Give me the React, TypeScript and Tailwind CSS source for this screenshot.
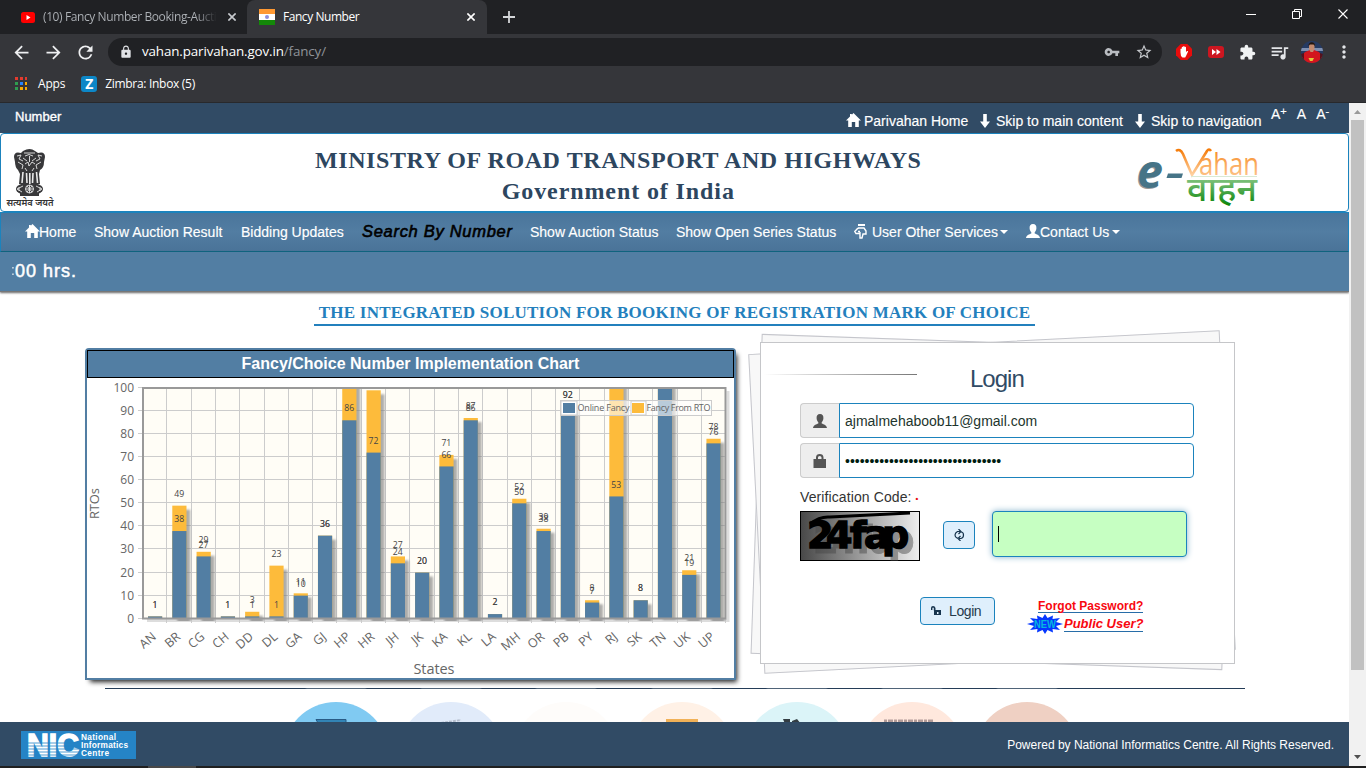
import React from "react";
import { MdVpnKey, MdStarBorder, MdExtension, MdQueueMusic, MdMoreVert, MdLock, MdRefresh, MdArrowBack, MdArrowForward } from "react-icons/md";

const states: [string, number, number][] = [
  ["AN", 1, 1], ["BR", 38, 49], ["CG", 27, 29], ["CH", 1, 1], ["DD", 1, 3], ["DL", 1, 23],
  ["GA", 10, 11], ["GJ", 36, 36], ["HP", 86, 110], ["HR", 72, 99], ["JH", 24, 27], ["JK", 20, 20],
  ["KA", 66, 71], ["KL", 86, 87], ["LA", 2, 2], ["MH", 50, 52], ["OR", 38, 39], ["PB", 92, 92],
  ["PY", 7, 8], ["RJ", 53, 110], ["SK", 8, 8], ["TN", 110, 110], ["UK", 19, 21], ["UP", 76, 78],
];

const HomeIcon = ({ className = "" }: { className?: string }) => (
  <svg className={className} width="15" height="14" viewBox="0 0 15 14" fill="currentColor">
    <path d="M7.5 0 15 7.6H12.8V14H9.2V9H5.8V14H2.2V7.6H0L4 3.5V1H5.8V1.8Z" />
  </svg>
);
const DownIcon = () => (
  <svg width="10" height="14" viewBox="0 0 10 14" fill="currentColor">
    <path d="M3.2 0H6.8V7.5H10L5 14 0 7.5H3.2Z" />
  </svg>
);
const UserIcon = ({ className = "" }: { className?: string }) => (
  <svg className={className} width="14" height="14" viewBox="0 0 14 14" fill="currentColor">
    <path d="M7 0C9.5 0 10.6 1.8 10.4 4.2 10.3 6 9.6 7.2 8.7 8.3V9.6C10.8 10.6 13.6 11.2 14 14H0C.4 11.2 3.2 10.6 5.3 9.6V8.3C4.4 7.2 3.7 6 3.6 4.2 3.4 1.8 4.500 0 7 0Z" />
  </svg>
);
const Caret = () => (
  <svg width="8" height="4" viewBox="0 0 8 4" fill="currentColor"><path d="M0 0H8L4 4Z" /></svg>
);
const Close = ({ s = 9, w = 1.6 }: { s?: number; w?: number }) => (
  <svg width={s} height={s} viewBox="0 0 10 10" stroke="currentColor" strokeWidth={w}><path d="M.5.5 9.500 9.500M9.500.5.5 9.500" /></svg>
);

function Browser() {
  return (
    <div className="h-[103px] shrink-0 border-b border-[#28292c] bg-[#35363a] font-['Open_Sans',sans-serif] text-xs text-white">
      <div className="flex h-[34px] bg-[#202124]">
        <div className="flex w-[247px] items-center rounded-br-lg pl-[21px]">
          <svg className="shrink-0" width="14" height="11" viewBox="0 0 14 11"><rect width="14" height="11" rx="2.500" fill="#f00" /><path d="M5.500 3 9.500 5.500 5.500 8Z" fill="#fff" /></svg>
          <span className="ml-[8px] w-[174px] overflow-hidden whitespace-nowrap bg-linear-to-r from-[#b0b4b9] from-88% to-[#202124] bg-clip-text tracking-[-0.4px] text-transparent">(10) Fancy Number Booking-Auction</span>
          <span className="ml-[11px] text-[#c8cbcf]"><Close s={8} w={2} /></span>
        </div>
        <div className="flex h-[34px] w-[240px] items-center rounded-t-lg bg-[#35363a] pl-3">
          <svg width="16" height="16" viewBox="0 0 16 16"><path fill="#ff9933" d="M0 0h16v5H0z" /><path fill="#fff" d="M0 5h16v6H0z" /><path fill="#138808" d="M0 11h16v5H0z" /><circle cx="8" cy="8" r="2" fill="#8e8edc" /></svg>
          <span className="ml-2 w-[184px] tracking-[-0.45px]">Fancy Number</span>
          <Close s={8} w={2} />
        </div>
        <div className="flex flex-1 items-center pl-4">
          <svg width="12" height="12" viewBox="0 0 12 12" stroke="#d4d6d9" strokeWidth="1.800"><path d="M6 0V12M0 6H12" /></svg>
        </div>
        <div className="flex items-start gap-[36px] pr-[18px] pt-[9px]">
          <svg width="10" height="11" viewBox="0 0 10 11" stroke="#fff"><path d="M0 5.500H10" /></svg>
          <svg width="10" height="10" viewBox="0 0 10 10" fill="none" stroke="#fff"><path d="M.5 2.500H7.500V9.500H.5ZM2.500 2.500V.5H9.500V7.500H7.500" /></svg>
          <Close s={10} w={1.1} />
        </div>
      </div>
      <div className="flex h-[35px] items-center pt-px">
        <div className="flex w-[108px] shrink-0 items-center gap-[11px] pl-[11px] text-[#eeeff1]">
          <MdArrowBack size={21} /><MdArrowForward size={21} /><MdRefresh size={21} />
        </div>
        <div className="flex h-7 w-[1054px] items-center rounded-full bg-[#202124] pl-[11px] text-[13.4px]">
          <MdLock size={14} className="text-[#e1e3e6]" />
          <span className="ml-[9px] tracking-[-0.13px]">vahan.parivahan.gov.in<span className="text-[#8f9398]">/fancy/</span></span>
          <span className="flex-1" />
          <MdVpnKey size={16} className="mr-[15px] text-[#b9bcc1]" />
          <MdStarBorder size={18} className="mr-[9px] text-[#c4c7cb]" />
        </div>
        <div className="flex flex-1 items-center pl-[14px]">
          <svg width="16" height="16" viewBox="0 0 16 16"><path fill="#e80c0c" d="M4.700 0h6.600L16 4.700v6.600L11.300 16H4.700L0 11.300V4.700Z" /><path fill="#fff" d="M4.500 8.500V5a.7.7 0 0 1 1.300 0V3.500a.7.7 0 0 1 1.400 0V2.700a.7.7 0 0 1 1.400 0v.8a.7.7 0 0 1 1.400 0V8l1.100-.9c.7-.4 1.200 0 .9.6L10 12l-.8 1.500H6.500L5 12Z" /></svg>
          <svg className="ml-4" width="16" height="12" viewBox="0 0 16 12"><rect width="16" height="12" rx="3" fill="#cd1620" /><path d="M4 3 8 6 4 9ZM8.500 3 12.500 6 8.500 9Z" fill="#fff" /></svg>
          <MdExtension size={17} className="ml-[15px] text-[#f1f3f4]" />
          <MdQueueMusic size={21} className="ml-[13px] text-[#e4e6e9]" />
          <svg className="ml-[11px]" width="22" height="22" viewBox="0 0 22 22">
            <defs><clipPath id="av"><circle cx="11" cy="11" r="11" /></clipPath></defs>
            <g clipPath="url(#av)"><rect width="22" height="22" fill="#253a62" /><path d="M0 7H22V10H0Z" fill="#7f8fb0" /><path d="M1 15 4 11 9 9H13L18 11 21 15V22H1Z" fill="#d3161d" /><path d="M0 13 3 12V22H0ZM19 12 22 13V22H19Z" fill="#55121c" /><path d="M8 3H13.500V8L12 11H9.500L8 8Z" fill="#c28a70" /><path d="M7.500 5C7 0 14.500 0 14 5L12.500 3.500H9Z" fill="#24160f" /><path d="M7.500 17H13L11.500 20H9Z" fill="#e3c73a" /></g>
          </svg>
          <MdMoreVert size={20} className="ml-[11px] text-[#e4e6e9]" />
        </div>
      </div>
      <div className="flex h-[30px] items-center pl-[15px]">
        <svg width="12" height="14" viewBox="0 0 12 14">
          <path fill="#e33b2e" d="M0 0h3v3H0zM5 0h3v3H5zM10 0h3v3h-3z" /><path fill="#2f9e50" d="M0 5h3v3H0zM0 10h3v3H0z" /><path fill="#2684fc" d="M5 5h3v3H5z" /><path fill="#f9ab00" d="M10 5h3v3h-3zM5 10h3v3H5zM10 10h3v3h-3z" />
        </svg>
        <span className="ml-[11px] tracking-[-0.2px]">Apps</span>
        <span className="ml-4 flex size-4 items-center justify-center rounded-[3px] bg-[#0d87c7] text-[14px] leading-none font-bold">Z</span>
        <span className="ml-2 tracking-[-0.3px]">Zimbra: Inbox (5)</span>
      </div>
    </div>
  );
}

function Emblem() {
  return (
    <svg width="50" height="62" viewBox="0 0 50 62">
      <g fill="#38383a">
        <path d="M17 3Q24-1 29 3L32 5Q39 3 39 9L38 14Q38 20 34 22L33 26 34 36H13L14 26 12 22Q9 19 9 14L8 9Q8 3 15 5Z" />
        <ellipse cx="23.500" cy="41" rx="13.500" ry="6.500" />
        <path d="M14 45H33V48H14Z" />
      </g>
      <g fill="none" stroke="#e9e9e9" strokeWidth=".9" transform="translate(-1 0)">
        <path d="M19 5H30M20 8Q24 5 28 8M18 10 22 13M31 10 27 13M24.500 8V14M12 8 16 7 14 11 18 13M37 8 33 7 35 11 31 13M13 14 18 17 17 21M36 14 31 17 32 21M20 16 23 14 24 18 27 14 30 16M20 20 22 23M29 20 27 23" />
        <path strokeWidth="1.600" d="M18 24 17 35M21.500 25 22 35M28 25 27.500 35M31.500 24 32.500 35M24.800 25V36" />
        <path d="M18 38 12 41 17 44M14 39V43M31 38 37 41 32 44M35 39V43" />
        <circle cx="24.500" cy="41" r="4" /><path d="M24.500 37V45M20.500 41H28.500M22 38 27 44M27 38 22 44" />
      </g>
      <text x="0.500" y="58" fontSize="9.500" fontWeight="600" fill="#333" fontFamily="Noto Sans Devanagari, Noto Sans, sans-serif" textLength="47" lengthAdjust="spacingAndGlyphs">सत्यमेव जयते</text>
    </svg>
  );
}

function VahanLogo() {
  return (
    <svg width="128" height="64" viewBox="0 0 128 64" fontFamily="Open Sans, sans-serif">
      <defs>
        <linearGradient id="or" x1="0" y1="0" x2="0" y2="1"><stop stopColor="#f57b08" /><stop offset="1" stopColor="#ffd2a3" /></linearGradient>
        <linearGradient id="gr" x1="0" y1="0" x2="0" y2="1"><stop offset=".2" stopColor="#7cc079" /><stop offset=".8" stopColor="#078407" /></linearGradient>
      </defs>
      <g fontWeight="bold" fontStyle="italic">
        <text x="1" y="42" fontSize="46" fill="#999" textLength="26" lengthAdjust="spacingAndGlyphs">e</text>
        <text x="2" y="41" fontSize="46" fill="#467487" textLength="26" lengthAdjust="spacingAndGlyphs">e</text>
      </g>
      <path d="M33 26.500H48L46.500 31H31.500Z" fill="#467487" />
      <path d="M41 4Q45 1 48 7L57 28 72 4Q74 1 76 4" fill="none" stroke="url(#or)" strokeWidth="2.600" />
      <text x="64" y="27.500" fontSize="31" fill="url(#or)" textLength="60" lengthAdjust="spacingAndGlyphs">ahan</text>
      <path d="M56 29.500H122" stroke="#d9e9d5" />
      <text x="52" y="54" fontSize="34" fontWeight="500" fill="url(#gr)" textLength="70" lengthAdjust="spacingAndGlyphs" fontFamily="Noto Sans Devanagari, Noto Sans, sans-serif">वाहन</text>
    </svg>
  );
}

function Header() {
  return (
    <>
      <div className="flex h-[30px] shrink-0 bg-[#314b65] text-sm text-white">
        <span className="pt-[5px] pl-[15px] text-[13px] [-webkit-text-stroke:0.35px]">Number</span>
        <div className="ml-auto flex items-center pt-[6px] text-[14px] leading-none whitespace-nowrap [-webkit-text-stroke:0.15px]">
          <HomeIcon className="mr-[3px] -translate-y-px" /><span className="w-[116px]">Parivahan Home</span>
          <DownIcon /><span className="ml-[6px] w-[139px]">Skip to main content</span>
          <DownIcon /><span className="ml-[6px] w-[120px]">Skip to navigation</span>
        </div>
        <div className="flex w-[78px] gap-[10px] pt-px text-[14px] [-webkit-text-stroke:0.15px]">
          <span>A<sup className="top-[-0.4em] text-[11px]">+</sup></span><span>A</span><span>A<sup className="top-[-0.4em] text-[11px]">-</sup></span>
        </div>
      </div>
      <div className="flex h-[79px] shrink-0 rounded border border-[#1b83bd] bg-white">
        <div className="w-[314px] pt-[14px] pl-[5px]"><Emblem /></div>
        <div className="pt-[11px] text-center font-['Liberation_Serif',serif] text-[24px] leading-[31px] font-bold whitespace-nowrap text-[#2d465f]">
          <div className="tracking-[0.59px]">MINISTRY OF ROAD TRANSPORT AND HIGHWAYS</div>
          <div className="tracking-[0.9px]">Government of India</div>
        </div>
        <div className="ml-auto w-[213px] pt-[13px]"><VahanLogo /></div>
      </div>
      <nav className="flex h-10 shrink-0 items-center border border-[#1b83bd] border-b-[#096480] bg-linear-to-b from-[#4a759b] via-[#527da2] to-[#4a7398] pl-6 text-[14px] whitespace-nowrap text-white [-webkit-text-stroke:0.15px]">
        <HomeIcon className="-mr-px -translate-y-px" /><span className="w-[55px]">Home</span>
        <span className="w-[147px]">Show Auction Result</span>
        <span className="w-[121px]">Bidding Updates</span>
        <span className="w-[168px] pb-px text-[16.500px] tracking-[0.7px] text-black italic [-webkit-text-stroke:0.6px]">Search By Number</span>
        <span className="w-[146px]">Show Auction Status</span>
        <span className="w-[178px]">Show Open Series Status</span>
        <svg className="-translate-y-px" width="13" height="15" viewBox="0 0 13 15" fill="none" stroke="currentColor" strokeWidth="1.400"><path strokeWidth="2" d="M4 1H11" /><path d="M4 4H10L12 7V10H9L8 14H6V8M4 4 .8 7.500 2 9.500H6M4 7.500H6" /></svg>
        <span className="ml-[5px] w-[128px]">User Other Services</span><Caret />
        <UserIcon className="ml-[18px] -translate-y-px" /><span className="w-[72px]">Contact Us</span><Caret />
      </nav>
      <div className="flex h-10 shrink-0 items-center border-b border-[#777] bg-[#527ea3] pb-px pl-[11px] text-lg tracking-[1px] text-white shadow-[0_1px_2px_#666]"><span className="text-[14px] opacity-80">:</span><span className="-ml-px [-webkit-text-stroke:0.5px]">00 hrs.</span></div>
    </>
  );
}

function Chart() {
  const y = (v: number) => 618.7 - Math.min(v, 100) * 2.307;
  return (
    <section className="relative z-10 mt-[16px] ml-[85px] h-[332px] w-[651px] shrink-0 rounded-t border-2 border-[#527ea3] bg-white shadow-[3px_4px_5px_-2px_#222]">
      <h2 className="h-7 border border-black bg-[#527ea3] text-center text-base leading-[25px] font-bold text-white">Fancy/Choice Number Implementation Chart</h2>
      <svg className="block" width="647" height="300" viewBox="87 378 647 300" fontFamily="Open Sans, sans-serif" fill="#666">
        <defs>
          <clipPath id="plot"><rect x="143" y="388" width="588" height="233" /></clipPath>
          <filter id="soft"><feGaussianBlur stdDeviation="1" /></filter>
        </defs>
        <path d="M147 620.500H728V391" fill="none" stroke="#bbb" strokeWidth="3" opacity=".5" />
        <rect x="143" y="388" width="583" height="231" fill="#fffdf6" />
        {Array.from({ length: 11 }, (_, i) => (
          <g key={i}>
            <path d={`M138 ${Math.round(y(i * 10)) - 0.5}H726`} stroke="#ccc" />
            <text x="134" y={y(i * 10) + 4} textAnchor="end" fontSize="12">{i * 10}</text>
          </g>
        ))}
        {states.map((s, i) => <path key={i} d={`M${Math.round(143 + (i + 1) * 24.3) - 0.5} 388V623`} stroke="#ccc" />)}
        <g clipPath="url(#plot)">
          {states.map(([n, , t], i) => t > 2 && <rect key={n} x={153 + i * 24.28} y={y(t) + (t > 100 ? -3 : 4)} width="13" height={623 - y(t)} fill="#777" opacity=".6" filter="url(#soft)" />)}
          {states.map(([n, b, t], i) => (
            <g key={n}>
              <rect x={148 + i * 24.28} y={y(t)} width="14.200" height={618 - y(t)} fill="#fdbb3b" />
              <rect x={148 + i * 24.28} y={y(b)} width="14.200" height={618 - y(b)} fill="#527ea3" />
            </g>
          ))}
        </g>
        <rect x="143" y="388" width="582.500" height="230.500" fill="none" stroke="#999" strokeWidth="2" />
        {states.map(([n, b, t], i) => (
          <g key={n}>
            <g fontSize="8.700" textAnchor="middle" fill="#444">
              {b <= 95 && <text x={155 + i * 24.28} y={y(b) - 8.8}>{b}</text>}
              {t <= 95 && <text x={155 + i * 24.28} y={y(t) - 8.8}>{t}</text>}
            </g>
            <text transform={`translate(${157 + i * 24.28} 638) rotate(-40)`} textAnchor="end" fontSize="12.500">{n}</text>
          </g>
        ))}
        <rect x="560.500" y="400.500" width="151" height="15" fill="#fff" fillOpacity=".6" stroke="#ccc" />
        <path d="M561 401H577V415H561ZM631 401H646V415H631Z" fill="#fff" stroke="#ccc" />
        <rect x="563" y="403" width="12" height="10" fill="#527ea3" />
        <rect x="632" y="403" width="12" height="10" fill="#fdbb3b" />
        <text x="577.500" y="411" fontSize="9" textLength="52">Online Fancy</text>
        <text x="646.500" y="411" fontSize="9" textLength="64">Fancy From RTO</text>
        <text x="434" y="674" textAnchor="middle" fontSize="14.500" textLength="41">States</text>
        <text transform="translate(99 519) rotate(-90)" fontSize="13" textLength="31">RTOs</text>
      </svg>
    </section>
  );
}

function Login() {
  return (
    <section className="relative ml-6 mt-[10px] h-[322px] w-[475px] shrink-0">
      <div className="absolute top-0 left-[-4px] h-[320px] w-[472px] rotate-[2deg] border border-[#c5c6cc] bg-[#f8f8f8]" />
      <div className="absolute top-0 left-[-4px] h-[320px] w-[472px] rotate-[-2.900deg] border border-[#c5c6cc] bg-[#f8f8f8]" />
      <div className="relative flex h-full flex-col border border-[#c5c6c9] bg-white pl-[39px]">
        <div className="flex h-[60px]">
          <div className="-ml-[36px] mt-[31px] h-px w-[153px] bg-linear-to-r from-white to-[#777]" />
          <h1 className="ml-[53px] pt-[18px] text-[24px] tracking-[-1px] text-[#314b65]">Login</h1>
        </div>
        {[0, 1].map((i) => (
          <div key={i} className="mb-[5px] flex h-[35px] w-[394px]">
            <div className="flex w-[39px] items-center justify-center rounded-l border border-r-0 border-[#ccc] bg-[#eee] text-[#555]">
              {i === 0 ? <UserIcon /> : <svg width="14" height="14" viewBox="0 0 14 14" fill="currentColor"><path d="M3 5V3.500C3 1 4.500 0 6.700 0S10.500 1 10.500 3.500V5H13V14H.5V5ZM5 5H8.500V3.500Q8.500 2 6.700 2T5 3.500Z" /></svg>}
            </div>
            <div className="flex flex-1 items-center rounded-r border border-[#1b83bd] pt-px pl-[5px] text-sm text-[#1d352d]">
              {i === 0 ? "ajmalmehaboob11@gmail.com" : <span className="text-[14px] tracking-[-0.02px] text-[#001c10]">••••••••••••••••••••••••••••••••</span>}
            </div>
          </div>
        ))}
        <div className="h-[28px] pt-[4px] text-sm tracking-[0.1px] text-[#333]">Verification Code: <span className="relative -top-px text-[8px] font-bold text-red-600">•</span></div>
        <div className="flex h-[50px]">
          <svg width="120" height="50" viewBox="0 0 120 50" fontFamily="DejaVu Sans, sans-serif" fontWeight="bold">
            <defs><linearGradient id="cap"><stop stopColor="#484848" /><stop offset="1" stopColor="#eee" /></linearGradient></defs>
            <rect x=".5" y=".5" width="119" height="49" fill="url(#cap)" stroke="#000" />
            <text x="13 32 56 70 88" y="42" fontSize="37" fill="#444" stroke="#444" opacity=".45">24fap</text>
            <text x="7 26 50 64 82" y="37" fontSize="38" stroke="#000" strokeWidth="1.500">24fap</text>
            <path d="M10 13Q20 5 30 6L110 2" fill="none" stroke="#000" strokeWidth="3" />
          </svg>
          <div className="mt-[10px] ml-[23px] flex h-7 w-8 items-center justify-center rounded border border-[#1b83bd] bg-[#dfeffc]">
            <svg width="11" height="12" viewBox="0 0 11 12" fill="none" stroke="#17344e" strokeWidth="1.200"><path d="M4 9H3Q1 8 1 6T3.500 2.500H6M4.500 0 7 2.500 4.500 5M7 3Q9.500 3 9.500 6T7 9.500H5M6.500 7 4 9.500 6.500 12" /></svg>
          </div>
          <div className="ml-[17px] flex h-[46px] w-[195px] items-center rounded border border-[#1b83bd] bg-[#c6ffc2] pl-[5px] shadow-[0_0_6px_#85b2cb]"><span className="h-4 w-px bg-black" /></div>
        </div>
        <div className="mt-[36px] flex pl-[120px]">
          <button className="flex h-7 w-[75px] items-center rounded border border-[#1b83bd] bg-[#dfeffc] pl-[10px] text-sm tracking-[-0.4px] text-[#263b4c]">
            <svg width="11" height="10" viewBox="0 0 11 10" fill="#17344e"><path d="M0 4V2Q0 0 2 0T4.500 2V4H10V9H3V4.500H2.800V2Q2 1 1.400 2V4ZM6 6V8H7.500V6Z" fillRule="evenodd" /></svg>
            <span className="ml-[7px]">Login</span>
          </button>
          <div className="ml-[32px] text-[12px] leading-[18px] font-bold text-[#f80810]">
            <div className="pl-[11px]"><span className="inline-block h-[14px] border-b border-[#276da8] leading-[14px]">Forgot Password?</span></div>
            <div className="-mt-px flex items-center">
              <svg className="mr-px shrink-0" width="36" height="20" viewBox="0 0 36 20"><path fill="#0537ff" d="m18 0 2.500 4L26 1.500 25.500 5 33 4 29 8 36 10 29 12 33 16 25.500 15 26 18.500 20.500 16 18 20 15.500 16 10 18.500 10.500 15 3 16 7 12 0 10 7 8 3 4 10.500 5 10 1.500 15.500 4Z" /><text x="18" y="13.500" textAnchor="middle" fontSize="10" fontWeight="bold" fill="#05b8de" fontFamily="Liberation Sans, sans-serif" textLength="22" lengthAdjust="spacingAndGlyphs">NEW</text></svg>
              <span className="h-[15px] border-b border-[#276da8] text-[13px] leading-[14px] whitespace-nowrap italic">Public User?</span>
            </div>
          </div>
        </div>
      </div>
    </section>
  );
}

const circles = [
  "bg-[#80caf2]", "bg-[#e1ebfa]", "bg-[#fefcfa]", "bg-[#fff1e6]", "bg-[#dbf4f8]", "bg-[#ffe8dd]", "bg-[#efd0c3]",
];
const glyphs = [
  <path key="0" d="M-20 .5H10V4H-18Z" fill="#3284b5" stroke="#285a85" />,
  <path key="1" d="M-10 4 10 1" stroke="#b3bccc" strokeWidth="2" strokeDasharray="3 1" />,
  null,
  <path key="3" d="M-16 0H16V5H-16Z" fill="#f1b157" />,
  <path key="4" d="M-14 0H-7V5H-12ZM-5 2 0 0 4 5H-5Z" fill="#333d43" />,
  <path key="5" d="M-28 2H22" stroke="#b39c99" strokeWidth="3" strokeDasharray="3 1 5 1" />,
  null,
];

export default function App() {
  return (
    <div className="flex h-[768px] w-[1366px] flex-col overflow-hidden bg-white font-['Liberation_Sans',Arial,sans-serif]">
      <Browser />
      <div className="flex h-[663px]">
        <main className="flex w-[1349px] flex-col overflow-hidden">
          <Header />
          <div className="h-[40px] shrink-0 pt-[9px] text-center">
            <h2 className="inline-block h-[25px] w-[721px] border-b-2 border-[#2380bd] font-['Liberation_Serif',serif] text-[17px] leading-[24px] font-bold tracking-[0.24px] whitespace-nowrap text-[#2380bd]">THE INTEGRATED SOLUTION FOR BOOKING OF REGISTRATION MARK OF CHOICE</h2>
          </div>
          <div className="flex h-[356px] shrink-0"><Chart /><Login /></div>
          <div className="ml-[105px] h-px w-[1140px] shrink-0 bg-[#243c57]" />
          <div className="ml-[283px] flex h-[33px] shrink-0 gap-[9.200px] pt-[13px]">
            {circles.map((c, i) => (
              <div key={i} className={`${c} flex size-[106px] shrink-0 justify-center rounded-full shadow-[0_0_0_20px_rgba(255,255,255,0.2)]`}>
                <svg className="mt-[17px]" width="70" height="6" viewBox="-35 0 70 6">{glyphs[i]}</svg>
              </div>
            ))}
          </div>
          <footer className="relative z-20 flex h-[45px] shrink-0 items-center bg-[#314b65] pr-[15px] pl-[21px] text-xs text-white">
            <div className="flex h-7 w-[115px] items-center bg-[#2584c6]">
              <svg width="115" height="28" viewBox="0 0 115 28" fill="#fff" fontWeight="bold" fontFamily="Liberation Sans, sans-serif">
                <text x="6" y="25" fontSize="32" stroke="#fff" strokeWidth="1.500" textLength="52" lengthAdjust="spacingAndGlyphs">NIC</text>
                <path d="M6 12H59M6 15H59M6 18H59M6 21H59M6 24H59" stroke="#2584c6" strokeWidth=".8" />
                <g fontSize="8.300"><text x="60" y="9" textLength="35">National</text><text x="60" y="17" textLength="47">Informatics</text><text x="60" y="24.500" textLength="28">Centre</text></g>
              </svg>
            </div>
            <span className="ml-auto">Powered by National Informatics Centre. All Rights Reserved.</span>
          </footer>
        </main>
        <aside className="flex w-[17px] flex-col items-center bg-[#f1f1f1]">
          <svg className="my-[6.500px] shrink-0" width="7" height="4" viewBox="0 0 7 4"><path d="M0 4H7L3.500 0Z" fill="#999" /></svg>
          <div className="h-[550px] w-[13px] bg-[#c1c1c1]" />
          <svg className="mt-auto mb-[7px]" width="7" height="4" viewBox="0 0 7 4"><path d="M0 0H7L3.500 4Z" fill="#505050" /></svg>
        </aside>
      </div>
      <div className="h-[2px] bg-[#202020] pl-[148px]"><div className="h-full w-[48px] bg-[#484848]" /></div>
    </div>
  );
}
